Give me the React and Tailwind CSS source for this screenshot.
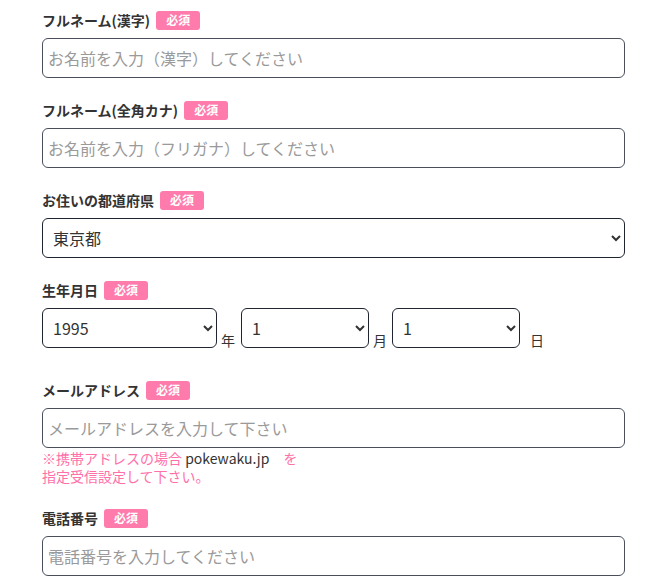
import React from "react";

const FONT = { fontFamily: '"Noto Sans CJK JP", "Noto Sans", sans-serif' };

function Badge() {
  return (
    <span className="ml-[6px] inline-flex h-[19px] items-center rounded-[3px] bg-[#ff7bac] px-[10px] text-[12px] font-bold leading-none text-white">
      必須
    </span>
  );
}

function Label({ children }) {
  return (
    <div className="flex h-[20px] items-center">
      <span className="text-[14px] font-bold leading-none text-[#333]">{children}</span>
      <Badge />
    </div>
  );
}

function TextInput({ placeholder }) {
  return (
    <input
      type="text"
      placeholder={placeholder}
      className="mt-[8px] block h-[40px] w-[583px] rounded-[6px] border border-[#4b4f5c] bg-white px-[5px] text-[16px] text-[#333] placeholder:text-[#9a9a9a] outline-none"
    />
  );
}

function Select({ value, options, width }) {
  return (
    <select
      defaultValue={value}
      className={`h-[40px] ${width} rounded-[6px] border border-[#1e2530] bg-white pl-[6px] pr-[6px] text-[16px] text-[#333]`}
    >
      {options.map((o) => (
        <option key={o}>{o}</option>
      ))}
    </select>
  );
}

export default function App() {
  const years = Array.from({ length: 60 }, (_, i) => String(1960 + i));
  const months = Array.from({ length: 12 }, (_, i) => String(i + 1));
  const days = Array.from({ length: 31 }, (_, i) => String(i + 1));

  return (
    <div className="min-h-[585px] bg-white pl-[42px] pt-[10px]" style={FONT}>
      <div className="flex flex-col gap-[22px]">
        <div>
          <Label>フルネーム(漢字)</Label>
          <TextInput placeholder="お名前を入力（漢字）してください" />
        </div>
        <div>
          <Label>フルネーム(全角カナ)</Label>
          <TextInput placeholder="お名前を入力（フリガナ）してください" />
        </div>
        <div>
          <Label>お住いの都道府県</Label>
          <div className="mt-[8px]">
            <Select value="東京都" options={["北海道", "東京都", "大阪府"]} width="w-[583px]" />
          </div>
        </div>
        <div>
          <Label>生年月日</Label>
          <div className="mt-[8px] flex items-end text-[14px] text-[#333]">
            <Select value="1995" options={years} width="w-[175px]" />
            <span className="ml-[4px] mr-[6px] leading-[16px]">年</span>
            <Select value="1" options={months} width="w-[128px]" />
            <span className="ml-[4px] mr-[5px] leading-[16px]">月</span>
            <Select value="1" options={days} width="w-[128px]" />
            <span className="ml-[10px] leading-[16px]">日</span>
          </div>
        </div>
        <div className="mt-[10px]">
          <Label>メールアドレス</Label>
          <TextInput placeholder="メールアドレスを入力して下さい" />
          <p className="mt-[1px] text-[14px] leading-[18px] text-[#ff6fa8]">
            ※携帯アドレスの場合 <span className="text-[#333]">pokewaku.jp</span>　を
            <br />
            指定受信設定して下さい。
          </p>
        </div>
        <div className="mt-[1px]">
          <Label>電話番号</Label>
          <TextInput placeholder="電話番号を入力してください" />
        </div>
      </div>
    </div>
  );
}
